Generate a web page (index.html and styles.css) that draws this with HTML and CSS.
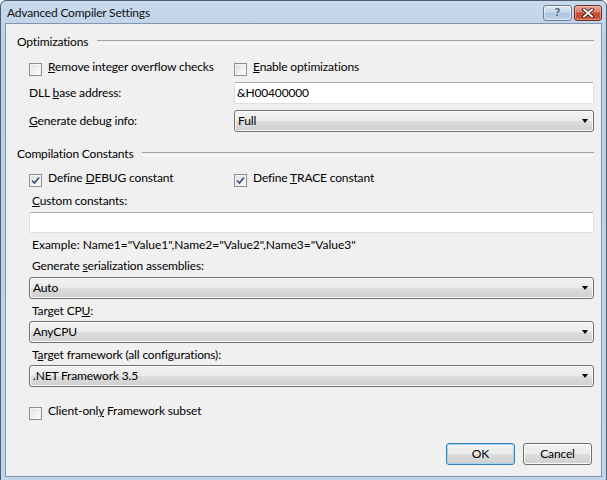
FILE: index.html
```html
<!DOCTYPE html>
<html lang="en">
<head>
<meta charset="utf-8">
<title>Advanced Compiler Settings</title>
<link rel="stylesheet" href="styles.css">
</head>
<body>
<div class="window">
  <div class="titlebar">
    <span class="title">Advanced Compiler Settings</span>
    <div class="caption-buttons">
      <span class="cap-btn help">?</span>
      <span class="cap-btn close">
        <svg width="14" height="10" viewBox="0 0 14 10"><path d="M3 1.5 L11 8.5 M11 1.5 L3 8.5" stroke="#4a1a14" stroke-width="3.6" stroke-linecap="square"/><path d="M3 1.5 L11 8.5 M11 1.5 L3 8.5" stroke="#ffffff" stroke-width="1.8" stroke-linecap="square"/></svg>
      </span>
    </div>
  </div>
  <div class="client">
    <div class="group-header">Optimizations</div>
    <div class="section">
      <div class="two-col check-row">
        <label class="check"><span class="box"></span><span><u>R</u>emove integer overflow checks</span></label>
        <label class="check"><span class="box"></span><span><u>E</u>nable optimizations</span></label>
      </div>
      <div class="two-col field-row dll-row">
        <span class="label">DLL <u>b</u>ase address:</span>
        <div class="textbox">&amp;H00400000</div>
      </div>
      <div class="two-col field-row debug-row">
        <span class="label"><u>G</u>enerate debug info:</span>
        <div class="combo"><span>Full</span><span class="arrow"></span></div>
      </div>
    </div>

    <div class="group-header compile-header">Compilation Constants</div>
    <div class="section">
      <div class="two-col check-row const-row">
        <label class="check"><span class="box checked"><svg width="9" height="9" viewBox="0 0 9 9"><path d="M1 4.5 L3.5 7 L8 1.5" fill="none" stroke="#3d4f7c" stroke-width="1.7"/></svg></span><span>Define <u>D</u>EBUG constant</span></label>
        <label class="check"><span class="box checked"><svg width="9" height="9" viewBox="0 0 9 9"><path d="M1 4.5 L3.5 7 L8 1.5" fill="none" stroke="#3d4f7c" stroke-width="1.7"/></svg></span><span>Define <u>T</u>RACE constant</span></label>
      </div>
      <div class="text-label custom-label"><u>C</u>ustom constants:</div>
      <div class="textbox wide"></div>
      <div class="text-label example">Example: Name1="Value1",Name2="Value2",Name3="Value3"</div>
      <div class="text-label ser-label">Generate <u>s</u>erialization assemblies:</div>
      <div class="combo wide first-combo"><span>Auto</span><span class="arrow"></span></div>
      <div class="text-label after-combo">Target CP<u>U</u>:</div>
      <div class="combo wide"><span>AnyCPU</span><span class="arrow"></span></div>
      <div class="text-label after-combo">T<u>a</u>rget framework (all configurations):</div>
      <div class="combo wide"><span>.NET Framework 3.5</span><span class="arrow"></span></div>
      <div class="check-row client-row">
        <label class="check"><span class="box"></span><span>Client-onl<u>y</u> Framework subset</span></label>
      </div>
    </div>

    <div class="button-row">
      <span class="btn default">OK</span>
      <span class="btn">Cancel</span>
    </div>
  </div>
</div>
</body>
</html>
```
FILE: styles.css
```css
* { box-sizing: border-box; }
html, body { margin: 0; padding: 0; }
body {
  width: 607px;
  height: 480px;
  overflow: hidden;
  background: #ffffff;
  font-family: "Lato", "Open Sans", sans-serif;
  font-size: 12px;
  letter-spacing: -0.15px;
  color: #000;
}
u { text-decoration: underline; text-underline-offset: 1px; }

.window {
  width: 607px;
  height: 482px;
  border: 1px solid #4f5d6c;
  border-radius: 6px 6px 0 0;
  background: linear-gradient(#c8d9ed, #bcd1e8 40px, #c0d4ea);
  display: flex;
  flex-direction: column;
}

.titlebar {
  height: 22px;
  flex: none;
  display: flex;
  align-items: flex-start;
  padding: 0 4px 0 6px;
}
.title { flex: 1; line-height: 23px; color: #111; letter-spacing: -0.2px; }
.caption-buttons { display: flex; gap: 2px; margin-top: 4px; }
.cap-btn {
  height: 16px;
  border-radius: 3px;
  display: flex;
  align-items: center;
  justify-content: center;
}
.help {
  width: 29px;
  border: 1px solid #6b7c90;
  background: linear-gradient(#dce7f3, #c7d8ec 45%, #adc5df 50%, #bcd2e9);
  box-shadow: inset 0 0 0 1px rgba(255,255,255,0.5);
  font-family: "DejaVu Sans", sans-serif;
  font-weight: 700;
  font-size: 11px;
  line-height: 14px;
  letter-spacing: 0;
  color: #5d6c80;
  text-shadow: 0 0 1px #fff, 0 0 1px #fff;
}
.close {
  width: 28px;
  border: 1px solid #6e2b22;
  background: linear-gradient(#e9a899, #d67a66 45%, #c4472f 50%, #cc5d42);
  box-shadow: inset 0 0 0 1px rgba(255,210,200,0.45);
}

.client {
  flex: 1;
  margin: 0 4px 4px;
  border: 1px solid #8294ab;
  background: #f0f0f0;
  display: flex;
  flex-direction: column;
  padding: 10px 7px 11px 11px;
}

.group-header {
  display: flex;
  align-items: center;
  height: 16px;
  line-height: 16px;
}
.group-header::after {
  content: "";
  flex: 1;
  height: 2px;
  margin-left: 9px;
  border-top: 1px solid #a0a0a0;
  border-bottom: 1px solid #ffffff;
}
.compile-header { margin-top: 14px; }

.section { margin-left: 12px; display: flex; flex-direction: column; }

.two-col { display: grid; grid-template-columns: 205px 1fr; }

.check-row { height: 16px; margin-top: 9px; }
.const-row { margin-top: 8px; }
.client-row { margin-top: 16px; }
.check { display: flex; align-items: flex-start; gap: 6px; line-height: 16px; }
.box {
  width: 13px;
  height: 13px;
  margin-top: 4px;
  flex: none;
  border: 1px solid #8e8f8f;
  background: linear-gradient(135deg, #dcdcdc, #f6f6f6 70%, #ffffff);
  box-shadow: inset 0 0 0 1px #f4f4f4;
  display: flex;
  align-items: center;
  justify-content: center;
}

.field-row { align-items: center; }
.dll-row { margin-top: 7px; }
.debug-row { margin-top: 6px; }
.label { line-height: 16px; }

.textbox {
  height: 22px;
  background: #fff;
  border: 1px solid #dbdfe6;
  border-top-color: #abadb3;
  border-radius: 2px;
  padding-left: 2px;
  line-height: 20px;
}
.textbox.wide { height: 21px; margin-top: 3px; }

.combo {
  height: 22px;
  border: 1px solid #707070;
  border-radius: 3px;
  background: linear-gradient(#f2f2f2, #ebebeb 50%, #dddddd 50%, #cfcfcf);
  box-shadow: inset 0 0 0 1px #fafafa;
  display: flex;
  align-items: center;
  justify-content: space-between;
  padding: 0 5px 0 3px;
  line-height: 20px;
}
.combo.wide { margin-top: 2px; }
.combo.first-combo { margin-top: 3px; }
.arrow {
  width: 0;
  height: 0;
  border-left: 3.5px solid transparent;
  border-right: 3.5px solid transparent;
  border-top: 4px solid #000;
}

.text-label { line-height: 16px; padding-left: 3px; }
.custom-label { margin-top: 7px; }
.example { margin-top: 4px; letter-spacing: 0; }
.ser-label { margin-top: 5px; }
.after-combo { margin-top: 4px; }

.button-row {
  margin-top: auto;
  display: flex;
  justify-content: flex-end;
  gap: 8px;
  margin-right: 2px;
}
.btn {
  width: 69px;
  height: 22px;
  border: 1px solid #707070;
  border-radius: 3px;
  background: linear-gradient(#f2f2f2, #ebebeb 50%, #dddddd 50%, #cfcfcf);
  box-shadow: inset 0 0 0 1px #fcfcfc;
  display: flex;
  align-items: center;
  justify-content: center;
  line-height: 20px;
}
.btn.default {
  border-color: #3c7fb1;
  box-shadow: inset 0 0 0 1px #9ed7f5;
}
```
